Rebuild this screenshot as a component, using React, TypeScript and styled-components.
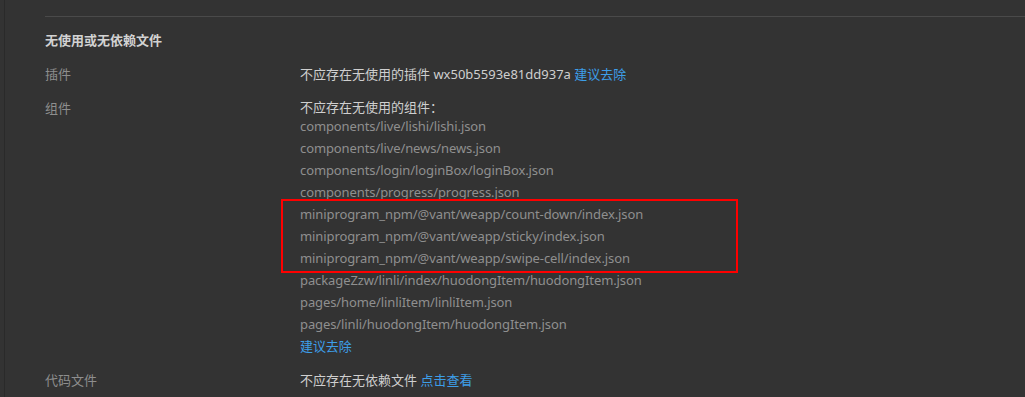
import React from 'react'
import styled, { createGlobalStyle } from 'styled-components'

const GlobalStyle = createGlobalStyle`
  html, body {
    margin: 0;
    padding: 0;
    background: #333333;
  }
  body {
    font-family: "Noto Sans", "Noto Sans CJK SC", sans-serif;
    font-size: 13px;
    -webkit-font-smoothing: antialiased;
  }
`

const Panel = styled.div`
  margin-left: 4px;
  min-height: 397px;
  border-left: 1px solid #2a2a2a;
  padding: 16px 0 0 40px;
  box-sizing: border-box;
`

const Divider = styled.div`
  height: 1px;
  background: #4a4a4a;
  margin-bottom: 12px;
`

const SectionTitle = styled.div`
  font-family: "Noto Sans CJK SC", sans-serif;
  font-weight: 700;
  font-size: 13px;
  line-height: 22px;
  color: #d2d2d2;
  margin-bottom: 12px;
`

const Rows = styled.div`
  display: flex;
  flex-direction: column;
  gap: 12px;
`

const Row = styled.div`
  display: grid;
  grid-template-columns: 255px 1fr;
  line-height: 22px;
`

const Label = styled.div`
  font-family: "Noto Sans CJK SC", sans-serif;
  color: #8e8e8e;
`

const Value = styled.div`
  color: #cfcfcf;
`

const ListHead = styled.div`
  line-height: 15px;
  margin-top: 3px;
`

const PathLine = styled.div`
  color: #8f8f8f;
  line-height: 22px;
  white-space: nowrap;
  letter-spacing: -0.1px;
`

const Highlight = styled.div`
  position: relative;

  &::before {
    content: '';
    position: absolute;
    left: -19px;
    top: -4px;
    width: 457px;
    height: 74px;
    border: 2px solid #ff0000;
    box-sizing: border-box;
    pointer-events: none;
  }
`

const Link = styled.a`
  color: #3d9ee8;
  text-decoration: none;
  cursor: pointer;
`

const unusedComponents = [
  'components/live/lishi/lishi.json',
  'components/live/news/news.json',
  'components/login/loginBox/loginBox.json',
  'components/progress/progress.json',
]

const vantComponents = [
  'miniprogram_npm/@vant/weapp/count-down/index.json',
  'miniprogram_npm/@vant/weapp/sticky/index.json',
  'miniprogram_npm/@vant/weapp/swipe-cell/index.json',
]

const pageComponents = [
  'packageZzw/linli/index/huodongItem/huodongItem.json',
  'pages/home/linliItem/linliItem.json',
  'pages/linli/huodongItem/huodongItem.json',
]

export default function App() {
  return (
    <>
      <GlobalStyle />
      <Panel>
        <Divider />
        <SectionTitle>无使用或无依赖文件</SectionTitle>
        <Rows>
          <Row>
            <Label>插件</Label>
            <Value>
              不应存在无使用的插件 wx50b5593e81dd937a <Link>建议去除</Link>
            </Value>
          </Row>
          <Row>
            <Label>组件</Label>
            <Value>
              <ListHead>不应存在无使用的组件：</ListHead>
              {unusedComponents.map((p) => (
                <PathLine key={p}>{p}</PathLine>
              ))}
              <Highlight>
                {vantComponents.map((p) => (
                  <PathLine key={p}>{p}</PathLine>
                ))}
              </Highlight>
              {pageComponents.map((p) => (
                <PathLine key={p}>{p}</PathLine>
              ))}
              <PathLine>
                <Link>建议去除</Link>
              </PathLine>
            </Value>
          </Row>
          <Row>
            <Label>代码文件</Label>
            <Value>
              不应存在无依赖文件 <Link>点击查看</Link>
            </Value>
          </Row>
        </Rows>
      </Panel>
    </>
  )
}
